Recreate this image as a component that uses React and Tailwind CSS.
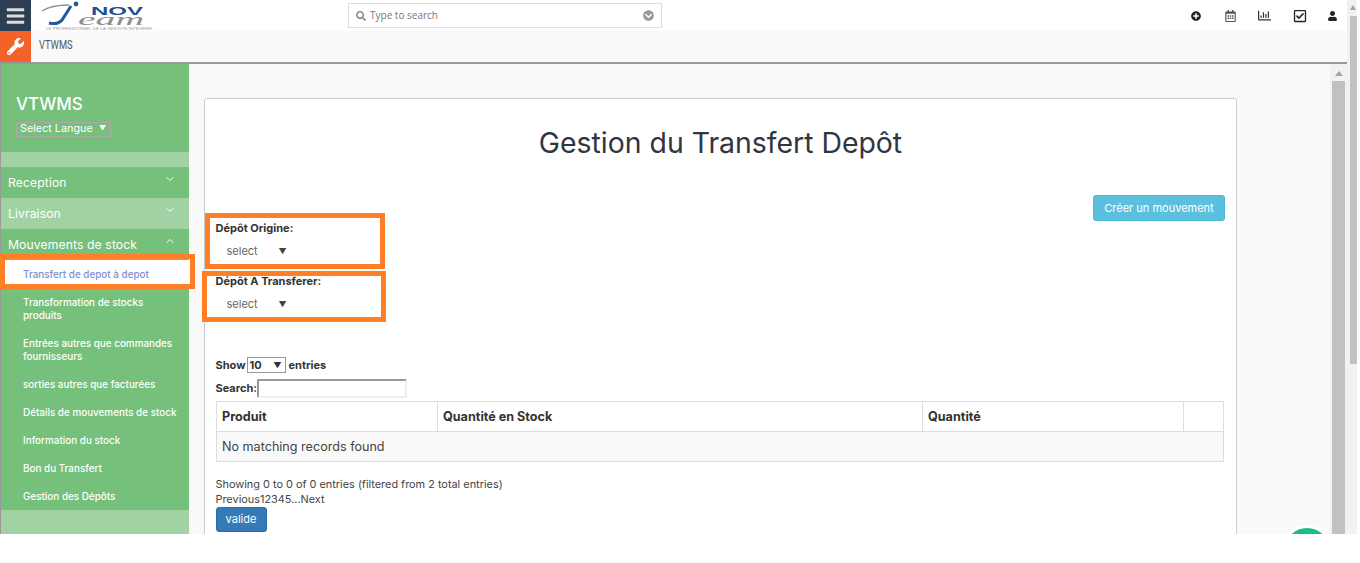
import React from "react";
import { ChevronDown, ChevronUp } from "lucide-react";
import { FaBars, FaChevronCircleDown, FaPlusCircle, FaRegCalendarAlt, FaRegChartBar, FaRegCheckSquare, FaSearch, FaUser, FaWrench } from "react-icons/fa";

const subLinks = [
  { label: "Transfert de depot à depot", active: true },
  { label: "Transformation de stocks produits" },
  { label: "Entrées autres que commandes fournisseurs" },
  { label: "sorties autres que facturées" },
  { label: "Détails de mouvements de stock" },
  { label: "Information du stock" },
  { label: "Bon du Transfert" },
  { label: "Gestion des Dépôts" },
];

const Sidebar = () => (
  <aside className="relative w-[189px] shrink-0 border-l border-[#999] bg-[#75c07b] text-white">
    <div className="h-[88px] pl-[15px] pt-[29px]">
      <div className="text-[17px] leading-[22px] font-medium">VTWMS</div>
      <div className="mt-[7px] flex h-[15px] w-[95px] items-center justify-between border border-[#aaa] px-[3px] text-[10.8px]">
        <span>Select Langue</span>
        <span className="mr-[1px] text-[7px]">▼</span>
      </div>
    </div>
    <div className="h-[15px] bg-[#a1d2a3]" />
    <div className="flex h-[31px] items-center justify-between pt-[1px] pl-[7px] pr-[13px] text-[12.2px] tracking-[0.1px]">
      Reception <ChevronDown className="mb-2 h-3 w-3" />
    </div>
    <div className="flex h-[31px] items-center justify-between pt-[1px] pl-[7px] pr-[13px] text-[12.2px] tracking-[0.1px] bg-[#a1d2a3]">
      Livraison <ChevronDown className="mb-2 h-3 w-3" />
    </div>
    <div className="flex h-[31px] items-center justify-between pt-[1px] pl-[7px] pr-[13px] text-[12.2px] tracking-[0.1px]">
      Mouvements de stock <ChevronUp className="mb-2 h-3 w-3" />
    </div>
    <ul className="text-[9.9px] leading-[13px] font-medium">
      {subLinks.map((l) => (
        <li
          key={l.label}
          className={l.active ? "bg-white pt-[8px] pb-[7px] pl-[22px] pr-2 text-[#7f8fd0]" : "pt-[8px] pb-[7px] pl-[22px] pr-2"}
        >
          {l.label}
        </li>
      ))}
    </ul>
    <div className="h-[40px] bg-[#a1d2a3]" />
    {/* annotation box, runs past the sidebar edge */}
    <div className="absolute left-[-1px] top-[190px] z-10 h-[35px] w-[195px] border-[5px] border-[#ff7f27]" />
  </aside>
);

const InnerScrollbar = () => (
  <div className="flex w-[17px] shrink-0 flex-col items-center bg-[#f1f1f1]">
    <div className="mt-[7px] h-0 w-0 border-x-[4px] border-b-[5px] border-x-transparent border-b-[#a3a3a3]" />
    <div className="mt-[5px] w-[13px] flex-1 bg-[#c1c1c1]" />
  </div>
);

const OuterScrollbar = () => (
  <div className="flex w-[10px] shrink-0 flex-col bg-[#f1f1f1]">
    <div className="mt-[5px] ml-[3px] h-0 w-0 border-x-[3.5px] border-b-[5px] border-x-transparent border-b-[#a3a3a3]" />
    <div className="mt-[6px] ml-[3px] h-[348px] w-[7px] bg-[#c1c1c1]" />
  </div>
);

const Main = () => (
  <main className="relative flex min-w-0 flex-1 bg-[#f9f9f9]">
    <div className="relative flex-1 overflow-hidden pl-[15px] pt-[34px]">
      <div className="h-[600px] w-[1033px] rounded-t-[3px] border border-[#ccc] bg-white text-[#333]">
        <h1 className="mt-[24px] text-center text-[28.4px] leading-[40px] font-normal text-[#2f3640]">
          Gestion du Transfert Depôt
        </h1>
        <div className="mt-[32px] flex justify-end pr-[11px]">
          <button className="h-[26px] w-[132px] rounded-[3px] border border-[#46b8da] bg-[#5bc0de] text-[11px] text-white">
            Créer un mouvement
          </button>
        </div>
        <div className="pl-[10.5px] text-[11px]">
          <label className="block font-bold leading-[14px]">Dépôt Origine:</label>
          <div className="mt-[5px] flex h-[22px] w-[75px] items-center justify-between pl-[11px] pr-[4px] text-[#666]">
            <span>select</span>
            <span className="text-[8px] text-[#444]">▼</span>
          </div>
          <label className="mt-[12px] block font-bold leading-[14px]">Dépôt A Transferer:</label>
          <div className="mt-[5px] flex h-[22px] w-[75px] items-center justify-between pl-[11px] pr-[4px] text-[#666]">
            <span>select</span>
            <span className="text-[8px] text-[#444]">▼</span>
          </div>
          <div className="mt-[42px] flex items-center gap-[2px] font-bold leading-[16px]">
            <span className="mr-[-1px]">Show</span>
            <span className="flex h-[16px] w-[39px] items-center justify-between border border-[#999] pl-[2px] pr-[3px]">
              10<span className="text-[8px]">▼</span>
            </span>
            <span className="ml-[1px]">entries</span>
          </div>
          <div className="mt-[6px] flex items-center font-bold">
            <span>Search:</span>
            <input className="h-[19px] w-[150px] border-2 border-t-[#999] border-l-[#999] border-r-[#eee] border-b-[#eee] bg-white" />
          </div>
        </div>
        <table className="mt-[3px] ml-[11px] w-[1008px] border-collapse border border-[#ddd] text-[12.6px]">
          <thead>
            <tr className="h-[30px] text-left">
              <th className="w-[221px] border border-[#ddd] pl-[5px] pt-[1px] font-bold">Produit</th>
              <th className="w-[485px] border border-[#ddd] pl-[5px] pt-[1px] font-bold">Quantité en Stock</th>
              <th className="w-[261px] border border-[#ddd] pl-[5px] pt-[1px] font-bold">Quantité</th>
              <th className="border border-[#ddd]" />
            </tr>
          </thead>
          <tbody>
            <tr className="h-[30px] bg-[#f9f9f9]">
              <td colSpan={4} className="pl-[5px] pt-[2px] text-[#444]">No matching records found</td>
            </tr>
          </tbody>
        </table>
        <div className="mt-[15px] pl-[10.5px] text-[10.9px] leading-[15px] text-[#444]">
          <div>Showing 0 to 0 of 0 entries (filtered from 2 total entries)</div>
          <div>Previous12345...Next</div>
          <button className="h-[25px] w-[51px] rounded-[3px] border border-[#2e6da4] bg-[#337ab7] text-[11px] text-white">
            valide
          </button>
        </div>
      </div>
      {/* annotation boxes */}
      <div className="absolute left-[16px] top-[149px] h-[56px] w-[180px] border-[5px] border-[#ff7f27]" />
      <div className="absolute left-[13px] top-[207px] h-[51px] w-[184px] border-[5px] border-[#ff7f27]" />
      <div className="absolute left-[1092px] top-[461px] h-[52px] w-[52px] rounded-full border-[3px] border-white bg-[#1abc8c]" />
    </div>
    <InnerScrollbar />
  </main>
);

const Logo = () => (
  <svg width="115" height="31" viewBox="0 0 115 31" className="ml-[9px] shrink-0">
    <path d="M2 11 C 8 7, 18 5, 29 5" stroke="#8a8f96" strokeWidth="1.5" fill="none" />
    <path d="M31 6 L 22 20 Q 18 25 9 23" stroke="#1f5c9c" strokeWidth="3" fill="none" />
    <circle cx="36" cy="4" r="2.4" fill="#1f5c9c" />
    <text x="51" y="15" fontFamily="Liberation Sans" fontWeight="700" fontSize="11" fill="#1f4f8c" textLength="52" lengthAdjust="spacingAndGlyphs">NOV</text>
    <text x="38" y="25" fontFamily="Liberation Serif" fontStyle="italic" fontSize="16" fill="#8d8d8d" textLength="66" lengthAdjust="spacingAndGlyphs">eam</text>
    <text x="6" y="30" fontFamily="Liberation Sans" fontSize="3" fill="#999" textLength="106" lengthAdjust="spacingAndGlyphs">LE PROFESSIONNEL DE LA GESTION INTEGREE</text>
  </svg>
);

const Header = () => (
  <div className="flex h-[31px] items-center bg-white">
    <div className="flex h-[31px] w-[31px] shrink-0 items-center justify-center bg-[#2c3e50]">
      <FaBars className="h-[20px] w-[19px] text-[#ddd]" />
    </div>
    <Logo />
    <div className="ml-[193px] flex h-[25px] w-[314px] shrink-0 items-center border border-[#ddd] pl-[7px] pr-[7px] font-['Open_Sans',sans-serif] text-[10px] text-[#777]">
      <FaSearch className="h-[10px] w-[10px] text-[#888]" />
      <span className="ml-[4px] flex-1">Type to search</span>
      <FaChevronCircleDown className="h-[11px] w-[11px] text-[#999]" />
    </div>
    <div className="ml-auto flex items-center text-[#222]">
      <FaPlusCircle className="h-[10px] w-[10px]" />
      <FaRegCalendarAlt className="ml-[24px] h-[12px] w-[11px] text-[#555]" />
      <FaRegChartBar className="ml-[22px] h-[13px] w-[13px] text-[#334]" />
      <FaRegCheckSquare className="ml-[22px] h-[14px] w-[14px]" />
      <FaUser className="ml-[21px] mr-[10px] h-[10px] w-[9px]" />
    </div>
  </div>
);

export default function App() {
  return (
    <div className="flex h-[534px] w-[1357px] overflow-hidden bg-white font-['Inter','Liberation_Sans',sans-serif]">
      <div className="flex min-w-0 flex-1 flex-col">
        <Header />
        <div className="flex h-[31px] shrink-0 items-center bg-[#f9f9f9]">
          <div className="flex h-[31px] w-[31px] items-center justify-center bg-[#f4622a]">
            <FaWrench className="h-[17px] w-[17px] text-white" />
          </div>
          <span className="mb-[3px] ml-[8px] origin-left scale-x-[0.72] font-['Roboto',sans-serif] text-[13px] leading-[28px] text-[#555]">VTWMS</span>
        </div>
        <div className="h-[2px] shrink-0 bg-[#999]" />
        <div className="flex min-h-0 flex-1">
          <Sidebar />
          <Main />
        </div>
      </div>
      <OuterScrollbar />
    </div>
  );
}
